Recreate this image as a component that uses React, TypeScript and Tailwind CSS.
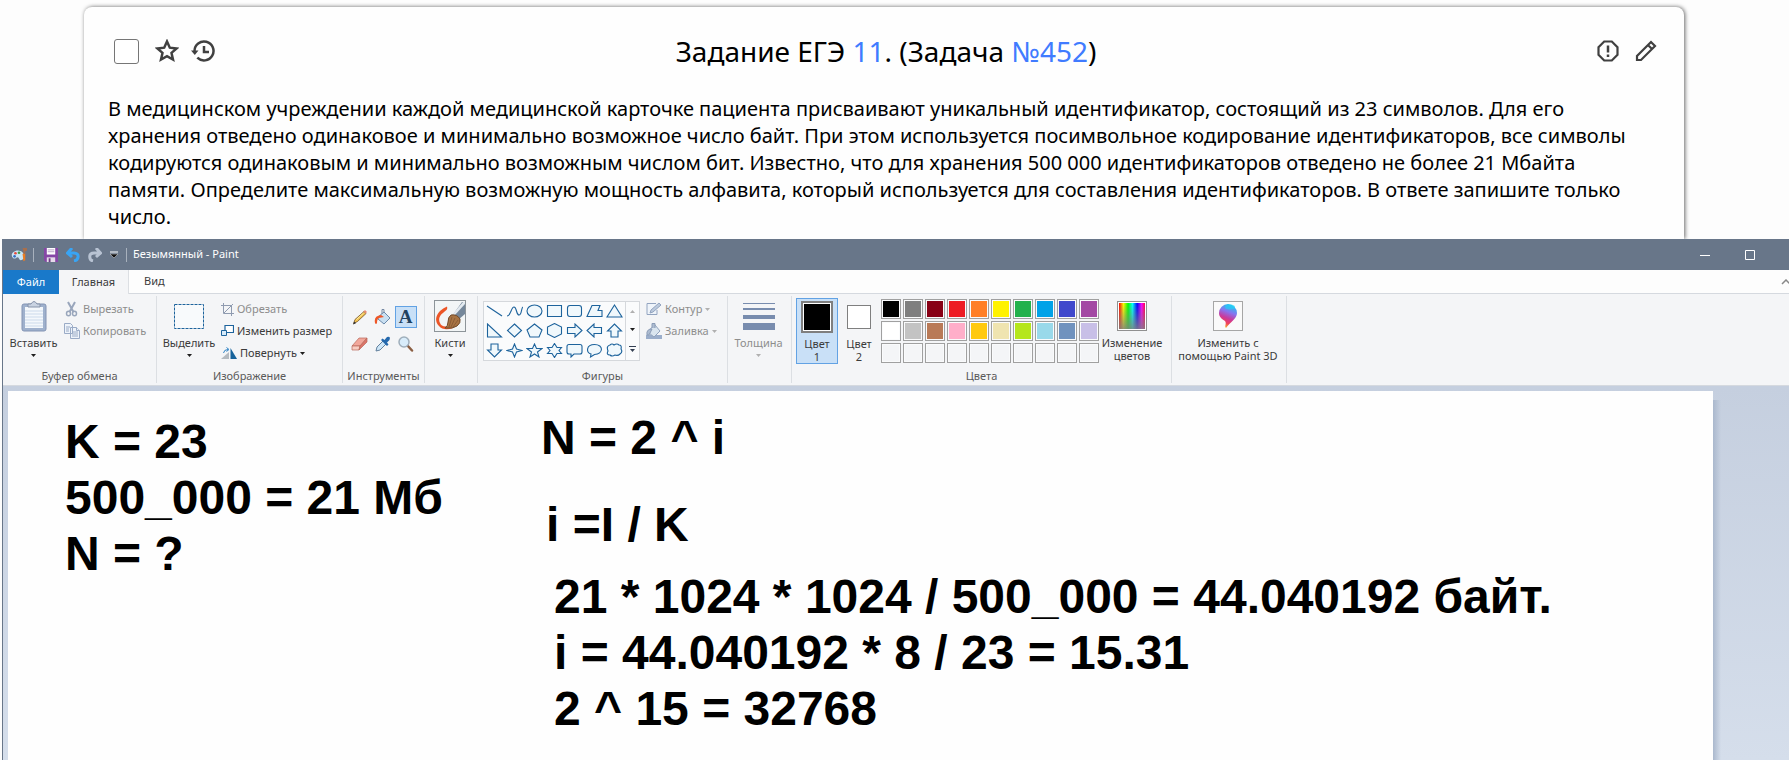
import React from 'react';

type P = { children?: React.ReactNode };

const Caret = ({ dim = false }: { dim?: boolean }) => (
  <svg width="5" height="3" viewBox="0 0 5 3" className={dim ? 'text-[#b0b0b0]' : 'text-[#1e1e1e]'}>
    <path d="M0 0h5L2.5 3z" fill="currentColor" />
  </svg>
);

const Group = ({ label, width, children }: { label: string; width: string } & P) => (
  <section className={`flex shrink-0 flex-col border-r border-[#dcdfe3] ${width}`}>
    <div className="flex flex-1">{children}</div>
    <div className="h-3.5 text-center text-[#5a5a5a]">{label}</div>
  </section>
);

const BigButton = ({ icon, lines, caret, dim, width }: { icon: React.ReactNode; lines: string[]; caret?: boolean; dim?: boolean; width: string }) => (
  <button className={`flex flex-col items-center ${width} ${dim ? 'text-[#8d8d8d]' : 'text-[#3b3b3b]'}`}>
    <span className="flex h-10 items-center">{icon}</span>
    {lines.map((l) => (
      <span key={l} className="h-[13px] whitespace-nowrap leading-[13px]">{l}</span>
    ))}
    {caret && <span className="flex h-3 items-center"><Caret dim={dim} /></span>}
  </button>
);

const SmallButton = ({ icon, label, caret, dim }: { icon: React.ReactNode; label: string; caret?: boolean; dim?: boolean }) => (
  <button className={`flex h-[22px] items-center gap-[3px] whitespace-nowrap ${dim ? 'text-[#8d8d8d]' : 'text-[#3b3b3b]'}`}>
    {icon}
    <span>{label}</span>
    {caret && <Caret dim={dim} />}
  </button>
);

const Clipboard = () => (
  <svg width="26" height="32" viewBox="0 0 26 32">
    <rect x="1" y="4" width="24" height="27" rx="2" fill="#9fb1cd" stroke="#8394b4" />
    <rect x="4" y="7" width="18" height="21" fill="#f4f8fc" />
    <path d="M4 11h18M4 14h18M4 17h18M4 20h18M4 23h18M4 26h18" stroke="#ccdaeb" />
    <path d="M7 7V4h3q3-5 6 0h3v3z" fill="#c9d3e2" stroke="#8592a9" />
  </svg>
);
const Scissors = () => (
  <svg width="16" height="16" viewBox="0 0 16 16" fill="none" stroke="#99a6bc" strokeWidth="2">
    <path d="M4 1l5.500 10M11 1L5.500 11" /><ellipse cx="4.500" cy="12.500" rx="2" ry="2.300" strokeWidth="1.500" /><ellipse cx="10.500" cy="12.500" rx="2" ry="2.300" strokeWidth="1.500" />
  </svg>
);
const Copy = () => (
  <svg width="16" height="16" viewBox="0 0 16 16" fill="#eef3fa" stroke="#9aabc6">
    <path d="M.5.5h6l2 2v8h-8zM6.500 4.500h6l3 3v8h-9z" /><path d="M2 4h4M2 6h3M2 8h3M8 9h6M8 11h6M8 13h6M12.500 4.500v3h3" />
  </svg>
);
const Crop = () => (
  <svg width="13" height="13" viewBox="0 0 13 13" fill="none" stroke="#8f9bb0">
    <path d="M0 2.500h10.500V13M2.500 0v10.500H13M3 10l9-9" />
  </svg>
);
const Resize = () => (
  <svg width="13" height="12" viewBox="0 0 13 12" fill="#fff" stroke="#1d639c">
    <path d="M4 .5h8.500v7H4z" strokeWidth="1.200" /><path d="M.5 5.500h5v5h-5z" fill="#d7ebfa" />
  </svg>
);
const Rotate = () => (
  <svg width="16" height="13" viewBox="0 0 16 13">
    <path d="M0 12L8 5v7z" fill="#b4bac0" /><path d="M9.500 1v11H16z" fill="#17639b" /><path d="M2.500 6Q3 2.500 7 2.500M5.500.5l2.500 2-2.500 2" fill="none" stroke="#2f83c5" />
  </svg>
);
const Pencil = () => (
  <svg width="16" height="16" viewBox="0 0 16 16">
    <path d="M1.500 14.500l1.500-4 9-8 2 2-8.500 8z" fill="#f2c14f" stroke="#775529" strokeWidth=".8" /><path d="M4.500 10.500l7-6.300" stroke="#fff1a8" /><path d="M11.500 2.500L13 1l2 2-1.500 1.500z" fill="#e98b73" /><path d="M1 15.500l1.300-3 1.700 1.700z" fill="#333" />
  </svg>
);
const Bucket = () => (
  <svg width="17" height="16" viewBox="0 0 17 16">
    <path d="M4 8l6-5 6 6-6 6-6-5z" fill="#c9dff1" stroke="#6a89ab" /><path d="M10 3V.5H8V5" stroke="#7589a3" fill="none" /><path d="M1 14Q-.5 7 7 6l3 2-5 1q-2 1-2 5-1 2-2 0z" fill="#ee5728" />
  </svg>
);
const Eraser = () => (
  <svg width="17" height="14" viewBox="0 0 17 14" stroke="#b86859" strokeWidth=".7">
    <path d="M1 9l7-8h8l-7 8z" fill="#f1a79b" /><path d="M1 9v4h7l1-4z" fill="#f8cdc2" /><path d="M9 9l7-8v4l-8 8z" fill="#dc7469" />
  </svg>
);
const Picker = () => (
  <svg width="16" height="16" viewBox="0 0 16 16">
    <path d="M1 15l1-4 6-6 3 3-6 6z" fill="#cde6f8" stroke="#62809d" /><path d="M6 4l6 6 1.500-1.500-1.500-2 2.500-2.500Q16 0 12 1L9.500 4 7.500 2.500z" fill="#2468ad" />
  </svg>
);
const Magnifier = () => (
  <svg width="16" height="16" viewBox="0 0 16 16">
    <path d="M9 9l5 5.500" stroke="#8b5f43" strokeWidth="2.500" strokeLinecap="round" /><circle cx="6" cy="6" r="5" fill="#d8ecfa" stroke="#9faebb" strokeWidth="1.500" />
  </svg>
);
const Brush = () => (
  <svg width="32" height="32" viewBox="0 0 32 32">
    <rect x=".5" y=".5" width="31" height="31" fill="#f2f5f6" stroke="#8d9499" />
    <path d="M31 2v12l-7 6-6-4L28 2z" fill="#75879a" /><path d="M29 2L18 15l2 1L31 4V2z" fill="#e3eaf0" />
    <path d="M13 6.500Q9 8 6 11c-5 5-5 11-1 15 3 4 9 4 14 2l-4-2c-5 1-8 0-9-3-2-4 0-8 3-10 3-3 5-3 4-6.500z" fill="#ec5526" />
    <path d="M17 15q6-1 9 4 1 4-3 7-4 3-12 2 3-2 3-6 0-5 3-7z" fill="#a87443" stroke="#704a2b" /><path d="M18 17l-3 10M21 18l-4 9M24 20l-5 7" stroke="#7b5130" strokeWidth=".7" />
  </svg>
);
const OutlineIcon = () => (
  <svg width="16" height="14" viewBox="0 0 16 14" fill="#eff4fa" stroke="#93a4c0">
    <path d="M10 1.500H1v11h10V8" /><path d="M4 11l1-3 8-7 2 2-8 7z" fill="#bccadd" />
  </svg>
);
const FillIcon = () => (
  <svg width="16" height="16" viewBox="0 0 16 16">
    <path d="M0 12h16v4H0z" fill="#9baecb" /><path d="M3 7l6-5 5 6-6 6-5-4z" fill="#dae5ef" stroke="#91a3bd" /><path d="M9 5V.5H6V5M1 12q-1-6 5-6L3 12z" fill="#aebdd2" stroke="#8b9cb6" />
  </svg>
);
const Spectrum = () => (
  <svg width="30" height="30" viewBox="0 0 30 30">
    <defs>
      <linearGradient id="hue"><stop offset="0" stopColor="#f00" /><stop offset=".17" stopColor="#ff0" /><stop offset=".35" stopColor="#0f0" /><stop offset=".52" stopColor="#0ff" /><stop offset=".7" stopColor="#00f" /><stop offset=".87" stopColor="#f0f" /><stop offset="1" stopColor="#f04" /></linearGradient>
      <linearGradient id="fade" x2="0" y2="1"><stop stopColor="#808080" stopOpacity="0" /><stop offset="1" stopColor="#808080" stopOpacity=".85" /></linearGradient>
    </defs>
    <rect x=".5" y=".5" width="29" height="29" fill="#fff" stroke="#909090" /><path d="M2 2h26v26H2z" fill="url(#hue)" /><path d="M2 2h26v26H2z" fill="url(#fade)" />
  </svg>
);
const Paint3D = () => (
  <svg width="30" height="30" viewBox="0 0 30 30">
    <defs>
      <linearGradient id="drop" x1=".7" y1="0" x2=".4" y2="1"><stop stopColor="#16cdf2" /><stop offset=".35" stopColor="#8873ef" /><stop offset=".6" stopColor="#c93b9d" /><stop offset=".8" stopColor="#ef3e5b" /><stop offset="1" stopColor="#f7b42c" /></linearGradient>
    </defs>
    <rect x=".5" y=".5" width="29" height="29" fill="#fafafa" stroke="#a6a6a6" />
    <path d="M15 3a9 9 0 0 1 9 9c0 6-7 9-11 15-2-2 1-4-1-7-3-2-6-4-6-8a9 9 0 0 1 9-9z" fill="url(#drop)" /><ellipse cx="17" cy="6" rx="5" ry="2.500" fill="#1dd3f5" opacity=".6" />
  </svg>
);

const shapes = [
  'M1 2l15 10', 'M1 12C5 12 5 3 8 3s2 8 5 8 2-7 4-8', 'M1 7a7.500 6 0 0 0 15 0A7.500 6 0 0 0 1 7z', 'M1.500 1.500h14v11h-14z', 'M4 1.500h9q2.500 0 2.500 2.500v6q0 2.500-2.500 2.500H4Q1.500 12.500 1.500 10V4Q1.500 1.500 4 1.500z', 'M6 1.500h8l-2 5h4v6H1z', 'M8.500 1l7.500 12H1z',
  'M1.500 1v13h14z', 'M8.500 1l7 6.500-7 6.500-7-6.500z', 'M8.500 1L16 7l-3 7H4L1 7z', 'M8.500.5L15.500 4v7l-7 3.500-7-3.500V4z', 'M1.500 4.500H9V1l7 6.500L9 14v-3.500H1.500z', 'M15.500 4.500H8V1L1 7.500 8 14v-3.500h7.500z', 'M5 14V8H1.500l7-7 7 7H12v6z',
  'M5 1v6H1.500l7 7 7-7H12V1z', 'M8.500 1l2 5 5.500 1.500-5.500 1.500-2 5-2-5L1 7.500 6.500 6z', 'M8.500 1l2 4.500H16l-4.500 3.500L13 14l-4.500-3L4 14l1.500-5L1 5.500h5.500z', 'M8.500.5l2.500 4h4.500L13 7.500l2.500 3H11l-2.500 4-2.500-4H1.500L4 7.500l-2.500-3H6z', 'M3 1.500h11q2 0 2 2V9q0 2-2 2H8l-3 3v-3H3q-2 0-2-2V3.500q0-2 2-2z', 'M4.500 14l.500-3C0 9.500 0 1.500 8.500 1.500c9.500 0 9 9.500 0 10z', 'M4 2q2-2 4 0 3-2 5 0 3 0 2 4 2 3-1 5-2 2-5 1-3 2-5 0Q0 12 2 8 0 3 4 2z',
];

const palette = ['#000000', '#7f7f7f', '#880015', '#ed1c24', '#ff7f27', '#fff200', '#22b14c', '#00a2e8', '#3f48cc', '#a349a4', '#ffffff', '#c3c3c3', '#b97a57', '#ffaec9', '#ffc90e', '#efe4b0', '#b5e61d', '#99d9ea', '#7092be', '#c8bfe7', '', '', '', '', '', '', '', '', '', ''];

function TaskCard() {
  return (
    <article className="mt-[7px] mr-[105px] ml-[84px] h-[232px] rounded-t-lg bg-[#fefefe] px-6 shadow-[1px_0_4px_rgba(0,0,0,0.6)]">
      <header className="flex h-[88px] items-center justify-between pr-0.5 pl-1.5">
        <div className="flex w-28 items-center gap-3 text-[#404040]">
          <input type="checkbox" aria-label="Выбрать задачу" className="size-[25px] appearance-none rounded-[3px] border border-[#767676] bg-white" />
          <button aria-label="В избранное" className="ml-1">
            <svg width="24" height="24" viewBox="0 0 24 24" fill="none" stroke="currentColor" strokeWidth="2.500"><path d="M12 2.500l2.800 6.200 6.800.7-5.100 4.500 1.500 6.700-6-3.500-6 3.500 1.500-6.700L2.400 9.400l6.800-.7z" /></svg>
          </button>
          <button aria-label="История">
            <svg width="24" height="24" viewBox="0 0 24 24" fill="none" stroke="currentColor" strokeWidth="2.500"><path d="M3.500 12a9.500 9.500 0 1 1 2.800 6.700" /><path d="M13 7v6h5" /><path d="M0 11.500h7.500L3.800 16z" fill="currentColor" stroke="none" /></svg>
          </button>
        </div>
        <h1 className="text-[28px] leading-9">Задание ЕГЭ <a href="#ege" className="text-[#407bff]">11</a>. (Задача <a href="#task" className="text-[#407bff]">№452</a>)</h1>
        <div className="flex w-28 items-center justify-end gap-3.5 text-[#404040]">
          <button aria-label="Сообщить об ошибке">
            <svg width="24" height="24" viewBox="0 0 24 24" fill="none" stroke="currentColor" strokeWidth="2.200"><path d="M8.200 2.500h7.600l5.700 5.700v7.600l-5.700 5.700H8.200l-5.700-5.700V8.200z" /><path d="M12 6.500v7M12 15.500V18" strokeWidth="2.500" /></svg>
          </button>
          <button aria-label="Редактировать">
            <svg width="24" height="24" viewBox="0 0 24 24" fill="none" stroke="currentColor" strokeWidth="2.200"><path d="M3 21v-4L17 3l4 4L7 21zM14 6l4 4" /></svg>
          </button>
        </div>
      </header>
      <p className="pr-2 text-[20px] leading-[27px]">
        В медицинском учреждении каждой медицинской карточке пациента присваивают уникальный идентификатор, состоящий из 23 символов. Для его хранения отведено одинаковое и минимально возможное число байт. При этом используется посимвольное кодирование идентификаторов, все символы кодируются одинаковым и минимально возможным числом бит. Известно, что для хранения 500 000 идентификаторов отведено не более 21 Мбайта памяти. Определите максимальную возможную мощность алфавита, который используется для составления идентификаторов. В ответе запишите только число.
      </p>
    </article>
  );
}

function TitleBar() {
  return (
    <div className="flex h-[31px] items-center bg-[#687689] pl-2 text-white">
      <svg width="16" height="16" viewBox="0 0 18 16"><path d="M8 3C2 3-1 8 2 11q2 2 4 0 2-1 3 1 1 3 4 1 4-2 1-7-2-3-6-3z" fill="#c8e5f5" /><circle cx="5" cy="6" r="1.500" fill="#e84c3d" /><circle cx="9" cy="5.500" r="1.500" fill="#3f9c4b" /><circle cx="4" cy="9.500" r="1.500" fill="#3570c4" /><path d="M13 7l3-1v8l-2 1z" fill="#ec7d22" /><path d="M13 0h5v3l-2 1v3h-2V4z" fill="#a76f4d" /></svg>
      <i className="ml-1.5 h-3.5 w-px bg-[#a8b1bd]" />
      <svg className="ml-2.5" width="14" height="14" viewBox="0 0 15 15"><path d="M0 0h15v15H2l-2-2z" fill="#8647a6" /><path d="M3 0h9v7H3z" fill="#fff" /><path d="M4 2h7M4 4h7" stroke="#b9a4c8" /><path d="M3 10h9v5H3z" fill="#e5dbea" /><path d="M5 11h2v4H5z" fill="#714086" /></svg>
      <svg className="ml-2" width="14" height="14" viewBox="0 0 14 14" fill="none" stroke="#39a4f4" strokeWidth="3"><path d="M2 5h6c6 0 5 7 0 8M6 0L1.500 5 6 9" /></svg>
      <svg className="ml-2" width="14" height="14" viewBox="0 0 14 14" fill="none" stroke="#b8c3d3" strokeWidth="3"><path d="M12 5H6C0 5 1 12 5 13M8 0l4.500 5L8 9" /></svg>
      <svg className="ml-2" width="8" height="7" viewBox="0 0 8 7"><path d="M0 1h8" stroke="#fff" /><path d="M0 3h8L4 7z" fill="#111" stroke="#ddd" strokeWidth=".5" /></svg>
      <i className="ml-2 h-3.5 w-px bg-[#a8b1bd]" />
      <span className="ml-1.5 flex-1 text-[11px]">Безымянный - Paint</span>
      <button aria-label="Свернуть"><svg width="10" height="10"><path d="M0 5.500h10" stroke="#fff" /></svg></button>
      <button aria-label="Развернуть" className="mr-[34px] ml-[35px]"><svg width="10" height="10"><path d="M.5.5h9v9h-9z" fill="none" stroke="#fff" /></svg></button>
    </div>
  );
}

function Ribbon() {
  return (
    <div className="flex h-[92px] overflow-hidden border-b border-[#d5d9df] bg-[#f4f5f7] pt-0.5 pb-0.5 text-[11px] leading-[14px]">
      <Group label="Буфер обмена" width="w-[154px]">
        <BigButton icon={<Clipboard />} lines={['Вставить']} caret width="w-[61px]" />
        <div className="pt-0.5"><SmallButton icon={<Scissors />} label="Вырезать" dim /><SmallButton icon={<Copy />} label="Копировать" dim /></div>
      </Group>
      <Group label="Изображение" width="w-[186px]">
        <BigButton icon={<svg width="30" height="25"><path d="M.5.5h29v24H.5z" fill="#f8fafc" stroke="#1d639c" strokeDasharray="3 1" /></svg>} lines={['Выделить']} caret width="w-[64px]" />
        <div className="pt-0.5"><SmallButton icon={<Crop />} label="Обрезать" dim /><SmallButton icon={<Resize />} label="Изменить размер" /><SmallButton icon={<Rotate />} label="Повернуть" caret /></div>
      </Group>
      <Group label="Инструменты" width="w-[82px]">
        <div className="ml-[5px] grid h-[60px] grid-cols-[repeat(3,23px)] place-items-center pt-1.5">
          <button aria-label="Карандаш"><Pencil /></button><button aria-label="Заливка"><Bucket /></button>
          <button aria-label="Текст" className="size-[22px] border border-[#62a2e4] bg-[#c9e0f7] font-['Liberation_Serif',serif] text-[19px] leading-5 font-bold text-[#1f4260]">A</button>
          <button aria-label="Ластик"><Eraser /></button><button aria-label="Палитра"><Picker /></button><button aria-label="Масштаб"><Magnifier /></button>
        </div>
      </Group>
      <Group label="" width="w-[53px]"><BigButton icon={<Brush />} lines={['Кисти']} caret width="w-[50px]" /></Group>
      <Group label="Фигуры" width="w-[250px]">
        <div className="mt-[5px] ml-[5px] flex h-[60px] w-[157px] border border-[#d5d8dc] bg-[#fafbfc]">
          <div className="grid flex-1 grid-cols-7 place-items-center">
            {shapes.map((d) => <svg key={d} width="17" height="15" viewBox="0 0 17 15" fill={d.endsWith('z') ? '#f0f8fc' : 'none'} stroke="#1d639c" strokeWidth="1.100"><path d={d} /></svg>)}
          </div>
          <div className="flex w-3.5 flex-col items-center justify-around border-l border-[#d5d8dc]">
            <span className="rotate-180"><Caret dim /></span><Caret /><svg width="7" height="6"><path d="M0 .5h7" stroke="#333f52" /><path d="M1 3h5L3.500 6z" fill="#333f52" /></svg>
          </div>
        </div>
        <div className="ml-1.5 pt-0.5"><SmallButton icon={<OutlineIcon />} label="Контур" caret dim /><SmallButton icon={<FillIcon />} label="Заливка" caret dim /></div>
      </Group>
      <Group label="" width="w-[64px]"><BigButton icon={<svg width="32" height="27" fill="#788cae"><path d="M0 0h32v1H0zM0 5h32v2H0zM0 12h32v4H0zM0 20h32v7H0z" /></svg>} lines={['Толщина']} caret dim width="w-[61px]" /></Group>
      <Group label="Цвета" width="w-[380px]">
        <button className="mt-0.5 ml-1 flex h-[66px] w-[42px] flex-col items-center border border-[#62a2e4] bg-[#c9e0f7] pt-0.5 leading-[13px] text-[#3b3b3b]"><span className="mb-1 size-8 border-2 border-[#7f7f7f] bg-black outline-1 -outline-offset-3 outline-white" />Цвет<br />1</button>
        <button className="mt-0.5 flex h-[66px] w-[42px] flex-col items-center pt-[7px] leading-[13px] text-[#3b3b3b]"><span className="mb-2 size-6 border border-[#7f7f7f] bg-white" />Цвет<br />2</button>
        <div className="mt-[3px] ml-px grid h-16 grid-cols-10 gap-0.5">
          {palette.map((c, i) => <button key={i} aria-label={c || 'Пустой цвет'} className="size-5 border border-[#a0a0a0] bg-[#fafbfc] p-px"><span className="block size-4" style={{ background: c || '#f4f5f7' }} /></button>)}
        </div>
        <BigButton icon={<Spectrum />} lines={['Изменение', 'цветов']} width="w-[66px]" />
      </Group>
      <Group label="" width="w-[115px]"><BigButton icon={<Paint3D />} lines={['Изменить с', 'помощью Paint 3D']} width="w-[112px]" /></Group>
    </div>
  );
}

const notes = [
  { at: 'left-[57px] top-[23px]', lines: ['K = 23', '500_000 = 21 Мб', 'N = ?'] },
  { at: 'left-[533px] top-[19px]', lines: ['N = 2 ^ i'] },
  { at: 'left-[538px] top-[106px]', lines: ['i =I / K'] },
  { at: 'left-[546px] top-[178px]', lines: ['21 * 1024 * 1024 / 500_000 = 44.040192 байт.', 'i = 44.040192 * 8 / 23 = 15.31', '2 ^ 15 = 32768'] },
];

export default function App() {
  return (
    <div className="flex h-screen flex-col overflow-hidden bg-[#fdfdfd] font-['Noto_Sans',sans-serif] text-black">
      <TaskCard />
      <main className="relative ml-0.5 flex flex-1 flex-col border-l border-[#687689] bg-[#c5cfdf]">
        <TitleBar />
        <nav className="flex h-6 items-end bg-[#fdfdfd] text-[11px] text-[#3b3b3b]">
          <button className="h-6 w-14 bg-[#1979ca] text-white">Файл</button>
          <button className="h-6 w-[70px] border-r border-[#dcdfe3] bg-[#f4f5f7]">Главная</button>
          <div className="flex h-6 flex-1 items-center justify-between border-b border-[#d5d9df] pl-[15px]">
            <button>Вид</button>
            <button aria-label="Свернуть ленту"><svg width="8" height="6"><path d="M1 5l4-4 4 4" fill="none" stroke="#888" strokeWidth="1.500" /></svg></button>
          </div>
        </nav>
        <Ribbon />
        <div className="flex flex-1 bg-linear-to-b from-[#c5cfdf] to-[#d5deeb] pt-[5px] pl-[5px]">
          <div className="relative mr-[76px] flex-1 bg-[#fefefe]">
            <div className="absolute top-[9px] bottom-0 left-full w-2 bg-linear-to-r from-[#aab8cd] to-transparent" />
            {notes.map((n) => (
              <div key={n.lines[0]} className={`absolute font-['Liberation_Sans',sans-serif] text-[48px] leading-[56px] font-bold whitespace-nowrap ${n.at}`}>
                {n.lines.map((l) => <p key={l}>{l}</p>)}
              </div>
            ))}
          </div>
        </div>
      </main>
    </div>
  );
}
